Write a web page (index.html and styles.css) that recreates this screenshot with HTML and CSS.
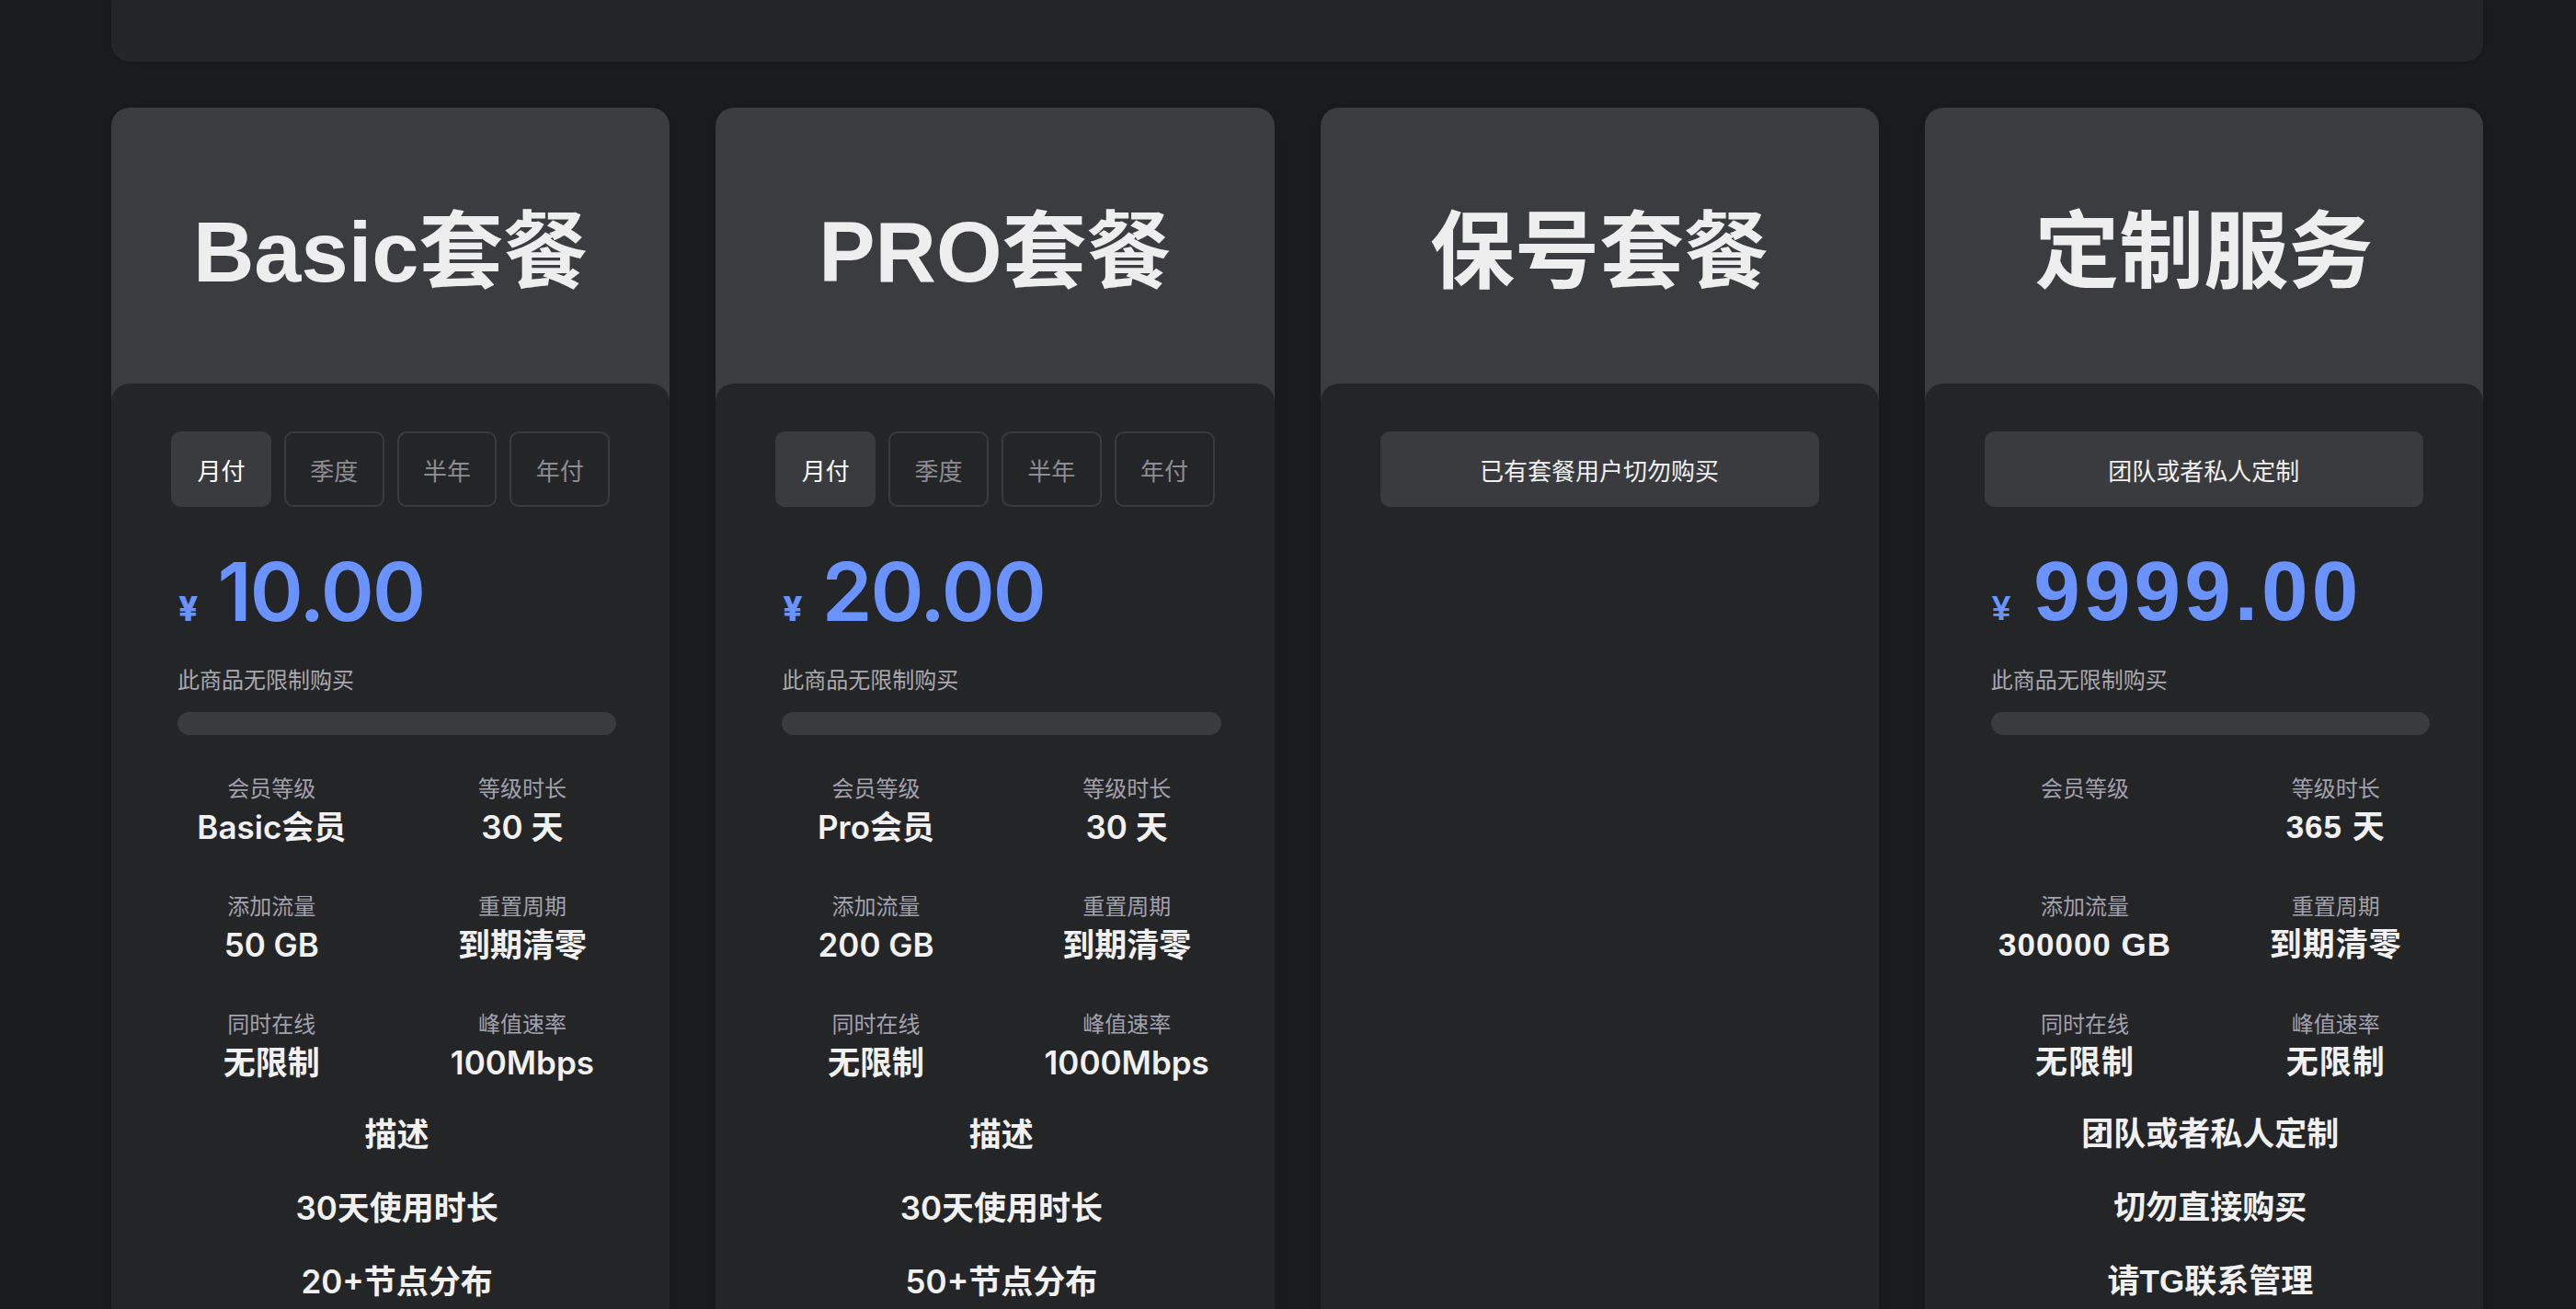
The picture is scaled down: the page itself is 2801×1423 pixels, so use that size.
FILE: index.html
```html
<!DOCTYPE html>
<html lang="zh-CN">
<head>
<meta charset="utf-8">
<title>套餐</title>
<link rel="stylesheet" href="styles.css">
</head>
<body>
<div class="page">
  <div class="top-panel"></div>
  <div class="plans">
    <div class="plan">
      <div class="plan-head"><h2 class="plan-title">Basic套餐</h2></div>
      <div class="plan-body">
        <div class="tabs">
          <div class="tab active">月付</div>
          <div class="tab">季度</div>
          <div class="tab">半年</div>
          <div class="tab">年付</div>
        </div>
        <div class="details">
          <div class="price"><span class="currency">¥</span><span class="amount">10.00</span></div>
          <p class="note">此商品无限制购买</p>
          <div class="bar"></div>
          <div class="specs">
            <div class="spec"><div class="spec-label">会员等级</div><div class="spec-value">Basic会员</div></div>
            <div class="spec"><div class="spec-label">等级时长</div><div class="spec-value">30 天</div></div>
            <div class="spec"><div class="spec-label">添加流量</div><div class="spec-value">50 GB</div></div>
            <div class="spec"><div class="spec-label">重置周期</div><div class="spec-value">到期清零</div></div>
            <div class="spec"><div class="spec-label">同时在线</div><div class="spec-value">无限制</div></div>
            <div class="spec"><div class="spec-label">峰值速率</div><div class="spec-value">100Mbps</div></div>
          </div>
          <div class="desc">
            <p>描述</p>
            <p>30天使用时长</p>
            <p>20+节点分布</p>
          </div>
        </div>
      </div>
    </div>

    <div class="plan">
      <div class="plan-head"><h2 class="plan-title">PRO套餐</h2></div>
      <div class="plan-body">
        <div class="tabs">
          <div class="tab active">月付</div>
          <div class="tab">季度</div>
          <div class="tab">半年</div>
          <div class="tab">年付</div>
        </div>
        <div class="details">
          <div class="price"><span class="currency">¥</span><span class="amount">20.00</span></div>
          <p class="note">此商品无限制购买</p>
          <div class="bar"></div>
          <div class="specs">
            <div class="spec"><div class="spec-label">会员等级</div><div class="spec-value">Pro会员</div></div>
            <div class="spec"><div class="spec-label">等级时长</div><div class="spec-value">30 天</div></div>
            <div class="spec"><div class="spec-label">添加流量</div><div class="spec-value">200 GB</div></div>
            <div class="spec"><div class="spec-label">重置周期</div><div class="spec-value">到期清零</div></div>
            <div class="spec"><div class="spec-label">同时在线</div><div class="spec-value">无限制</div></div>
            <div class="spec"><div class="spec-label">峰值速率</div><div class="spec-value">1000Mbps</div></div>
          </div>
          <div class="desc">
            <p>描述</p>
            <p>30天使用时长</p>
            <p>50+节点分布</p>
          </div>
        </div>
      </div>
    </div>

    <div class="plan">
      <div class="plan-head"><h2 class="plan-title">保号套餐</h2></div>
      <div class="plan-body">
        <div class="notice-btn">已有套餐用户切勿购买</div>
      </div>
    </div>

    <div class="plan plan--alt">
      <div class="plan-head"><h2 class="plan-title">定制服务</h2></div>
      <div class="plan-body">
        <div class="notice-btn">团队或者私人定制</div>
        <div class="details">
          <div class="price"><span class="currency">¥</span><span class="amount">9999.00</span></div>
          <p class="note">此商品无限制购买</p>
          <div class="bar"></div>
          <div class="specs">
            <div class="spec"><div class="spec-label">会员等级</div><div class="spec-value"></div></div>
            <div class="spec"><div class="spec-label">等级时长</div><div class="spec-value">365 天</div></div>
            <div class="spec"><div class="spec-label">添加流量</div><div class="spec-value">300000 GB</div></div>
            <div class="spec"><div class="spec-label">重置周期</div><div class="spec-value">到期清零</div></div>
            <div class="spec"><div class="spec-label">同时在线</div><div class="spec-value">无限制</div></div>
            <div class="spec"><div class="spec-label">峰值速率</div><div class="spec-value">无限制</div></div>
          </div>
          <div class="desc">
            <p>团队或者私人定制</p>
            <p>切勿直接购买</p>
            <p>请TG联系管理</p>
          </div>
        </div>
      </div>
    </div>
  </div>
</div>
</body>
</html>
```

FILE: styles.css
```css
html, body {
  margin: 0;
  background: #1b1c1e;
}
body {
  font-family: "Inter", "Noto Sans CJK SC", sans-serif;
  color: #f1f1f1;
}
.page {
  padding: 0 101px 0 121px;
}
.top-panel {
  height: 67px;
  background: #242527;
  border-radius: 0 0 20px 20px;
  box-shadow: 0 0 18px rgba(0, 0, 0, 0.2);
}
.plans {
  margin-top: 50px;
  display: grid;
  grid-template-columns: repeat(4, 1fr);
  gap: 50px;
}
.plan {
  display: flex;
  flex-direction: column;
  background: #3b3c3f;
  border-radius: 20px;
  overflow: hidden;
  box-shadow: 0 0 18px rgba(0, 0, 0, 0.2);
}
.plan-head {
  box-sizing: border-box;
  height: 300px;
  padding-top: 14px;
  display: flex;
  align-items: center;
  justify-content: center;
}
.plan-title {
  margin: 0;
  font-family: "Liberation Sans", "Noto Sans CJK SC", sans-serif;
  font-weight: 700;
  font-size: 92px;
  line-height: 1;
  color: #eeeeee;
}
.plan-body {
  flex: 1;
  background: #242527;
  border-radius: 20px 20px 0 0;
  padding: 52px 65px 140px;
}
.tabs {
  display: flex;
  gap: 14px;
}
.tab {
  box-sizing: border-box;
  width: 109px;
  height: 82px;
  border: 2px solid #3a3b3e;
  border-radius: 10px;
  display: flex;
  align-items: center;
  justify-content: center;
  font-family: "Noto Sans CJK SC", sans-serif;
  font-size: 26px;
  color: #8c8c92;
}
.tab.active {
  background: #3a3b3e;
  color: #ffffff;
}
.notice-btn {
  height: 82px;
  background: #3a3b3e;
  border-radius: 10px;
  display: flex;
  align-items: center;
  justify-content: center;
  font-family: "Noto Sans CJK SC", sans-serif;
  font-size: 26px;
  color: #f0f0f0;
}
.details {
  margin: 48px -7px 0 7px;
}
.price {
  display: flex;
  align-items: baseline;
  height: 88px;
  line-height: 88px;
  color: #6b93ff;
}
.currency {
  font-size: 37px;
  font-weight: 800;
  margin: 0 21px 0 1px;
}
.amount {
  font-size: 88px;
  font-weight: 600;
  letter-spacing: -2px;
}
.note {
  margin: 34px 0 0;
  font-family: "Noto Sans CJK SC", sans-serif;
  font-size: 24px;
  line-height: 34px;
  color: #a9a9ae;
}
.bar {
  margin-top: 19px;
  height: 25px;
  border-radius: 13px;
  background: #3a3b3e;
}
.specs {
  margin: 40px -34px 0;
  display: grid;
  grid-template-columns: 1fr 1fr;
  row-gap: 46px;
  text-align: center;
}
.spec-label {
  font-family: "Noto Sans CJK SC", sans-serif;
  font-size: 24px;
  line-height: 34px;
  color: #a1a1ae;
}
.spec-value {
  margin-top: 4px;
  min-height: 44px;
  font-size: 35px;
  line-height: 44px;
  font-weight: 600;
}
.desc {
  margin-top: 34px;
  text-align: center;
}
.desc p {
  margin: 0 0 36px;
  font-size: 35px;
  line-height: 44px;
  font-weight: 600;
}
.plan--alt .currency {
  font-family: "Liberation Sans", "Noto Sans CJK SC", sans-serif;
  font-weight: 700;
  margin-right: 25px;
}
.plan--alt .amount {
  font-family: "Liberation Sans", sans-serif;
  font-weight: 700;
  font-size: 91px;
  letter-spacing: 4px;
}
.plan--alt .spec-value,
.plan--alt .desc p {
  font-family: "Liberation Sans", "Noto Sans CJK SC", sans-serif;
  font-weight: 700;
}
.plan--alt .spec-value {
  letter-spacing: 1px;
}
```
